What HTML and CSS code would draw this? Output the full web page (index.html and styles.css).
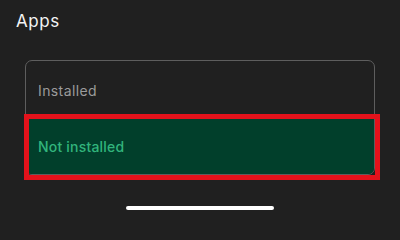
FILE: index.html
```html
<!DOCTYPE html>
<html>
<head>
<meta charset="utf-8">
<link rel="stylesheet" href="styles.css">
</head>
<body>
<div class="screen">
  <h1 class="title">Apps</h1>
  <div class="card-wrap">
    <div class="card">
      <div class="row row-installed">Installed</div>
      <div class="row row-selected">Not installed</div>
    </div>
    <div class="highlight"></div>
  </div>
  <div class="home-bar"></div>
</div>
</body>
</html>
```
FILE: styles.css
```css
html, body {
  margin: 0;
  padding: 0;
  background: #202020;
}
.screen {
  width: 400px;
  height: 216px;
  position: relative;
  font-family: Inter, "Open Sans", "Liberation Sans", sans-serif;
  display: flex;
  flex-direction: column;
}
.title {
  margin: 0;
  padding: 8px 0 0 16px;
  font-size: 17px;
  font-weight: 400;
  letter-spacing: 0.6px;
  line-height: 26px;
  color: #f4f4f4;
}
.card-wrap {
  position: relative;
  margin: 26px 0 0 25px;
  width: 350px;
}
.card {
  border: 1px solid #5e5e5e;
  border-radius: 7px;
  overflow: hidden;
  display: flex;
  flex-direction: column;
}
.row {
  padding-left: 12px;
  display: flex;
  align-items: center;
  font-size: 14px;
  letter-spacing: 0.4px;
}
.row-installed {
  height: 58px;
  color: #9b9b9b;
}
.row-selected {
  height: 55px;
  background: #013f2b;
  color: #31b47c;
  font-weight: 500;
  letter-spacing: 0.2px;
}
.highlight {
  position: absolute;
  left: -1.5px;
  top: 54px;
  width: 346px;
  height: 56px;
  border: 5px solid #e3121b;
}
.home-bar {
  position: absolute;
  left: 126px;
  top: 206px;
  width: 148px;
  height: 4px;
  border-radius: 2px;
  background: #ffffff;
}
```
